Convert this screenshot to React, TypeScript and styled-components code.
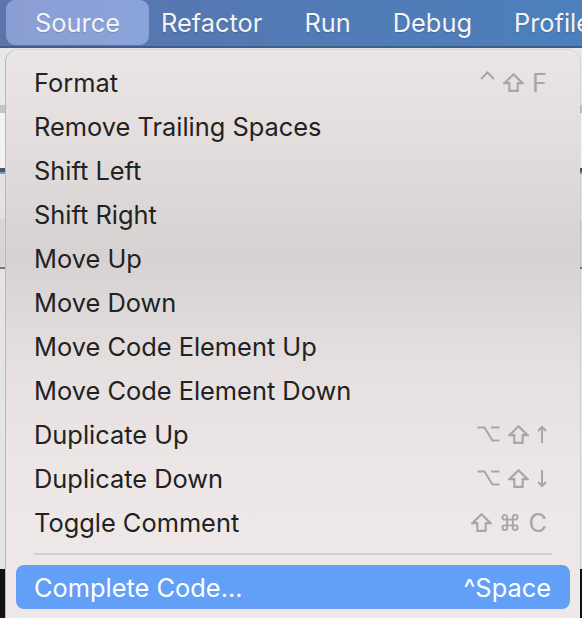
import React from "react";
import styled, { createGlobalStyle } from "styled-components";

const Global = createGlobalStyle`
  html, body { margin: 0; padding: 0; }
  body { width: 582px; height: 618px; overflow: hidden; background: #dcdcdc; }
  * { box-sizing: border-box; }
`;

const Page = styled.div`
  position: relative;
  width: 582px;
  height: 618px;
  overflow: hidden;
  font-family: Inter, "Liberation Sans", sans-serif;
  display: flex;
  flex-direction: column;
`;

const MenuBar = styled.div`
  height: 48px;
  flex: none;
  display: flex;
  align-items: stretch;
  padding: 0 0 1px 6px;
  background: linear-gradient(90deg, #5c74aa 0%, #5479b3 40%, #4b80bc 100%);
  border-bottom: 2px solid #3d5f8a;
  overflow: hidden;
`;

const MenuTitle = styled.div<{ $active?: boolean }>`
  display: flex;
  align-items: center;
  flex: none;
  font-size: 25.4px;
  color: #f4f4f8;
  white-space: nowrap;
  padding: ${(p) => (p.$active ? "0 29px" : "0 21px")};
  margin-right: ${(p) => (p.$active ? "-9px" : "0")};
  border-radius: ${(p) => (p.$active ? "9px" : "0")};
  background: ${(p) => (p.$active ? "linear-gradient(90deg, #8a9ed4, #8aa4d9)" : "transparent")};
  text-shadow: 0 1px 1px rgba(0, 0, 0, 0.15);
`;

const Backdrop = styled.div`
  flex: 1;
  display: flex;
  flex-direction: column;
  background: #e6e6e6;
`;

const Strip = styled.div<{ $h: number; $bg: string }>`
  height: ${(p) => p.$h}px;
  flex: none;
  background: ${(p) => p.$bg};
`;

const Dropdown = styled.div`
  position: absolute;
  left: 6px;
  top: 50px;
  right: 2px;
  bottom: -20px;
  border-radius: 12px;
  background: linear-gradient(
    180deg,
    #ebe5e5 0%,
    #e3dddd 15%,
    #d7d2d2 35%,
    #e6e0e0 55%,
    #ede8e7 75%,
    #eee9e8 100%
  );
  box-shadow: -1px 0 0 #b9b9b9, 0 0 0 1px rgba(0, 0, 0, 0.08);
  padding: 10px 10px 0 10px;
  display: flex;
  flex-direction: column;
`;

const Item = styled.div<{ $selected?: boolean }>`
  height: 44px;
  display: flex;
  align-items: center;
  justify-content: space-between;
  padding: 0 ${(p) => (p.$selected ? "19px" : "23px")} 0 18px;
  border-radius: 8px;
  font-size: 25.4px;
  color: ${(p) => (p.$selected ? "#ffffff" : "#222222")};
  background: ${(p) => (p.$selected ? "#62a0f7" : "transparent")};
`;

const Label = styled.span`
  white-space: nowrap;
`;

const Shortcut = styled.span<{ $selected?: boolean }>`
  display: flex;
  align-items: center;
  gap: 8px;
  color: ${(p) => (p.$selected ? "#ffffff" : "#a9a5a4")};
  font-size: 25.4px;
  white-space: nowrap;
`;

const KeyIcon = styled.svg<{ $raise?: number }>`
  display: block;
  flex: none;
  fill: none;
  stroke: currentColor;
  stroke-width: 2;
  stroke-linejoin: miter;
  transform: translateY(${(p) => -(p.$raise ?? 0)}px);
`;

const Control = () => (
  <KeyIcon width="15" height="9" viewBox="0 0 15 9" $raise={7}>
    <path d="M1 8 L7.5 1.5 L14 8" />
  </KeyIcon>
);
const Shift = () => (
  <KeyIcon width="21" height="19" viewBox="0 0 20 18">
    <path d="M10 1.2 L18.6 9.6 H14 V17 H6 V9.6 H1.4 Z" />
  </KeyIcon>
);
const Option = () => (
  <KeyIcon width="23" height="16" viewBox="0 0 23 16">
    <path d="M0.5 1.5 H7.5 L15.5 14.5 H22.5 M14 1.5 H22.5" />
  </KeyIcon>
);
const Command = () => (
  <KeyIcon width="20" height="19" viewBox="0 0 20 20">
    <path d="M7 7 V4.5 A2.5 2.5 0 1 0 4.5 7 H15.5 A2.5 2.5 0 1 0 13 4.5 V15.5 A2.5 2.5 0 1 0 15.5 13 H4.5 A2.5 2.5 0 1 0 7 15.5 Z" />
  </KeyIcon>
);
const ArrowUp = () => (
  <KeyIcon width="10" height="19" viewBox="0 0 10 18">
    <path d="M5 1.5 V17.5 M1 5.5 L5 1.5 L9 5.5" />
  </KeyIcon>
);
const ArrowDown = () => (
  <KeyIcon width="10" height="19" viewBox="0 0 10 18">
    <path d="M5 0.5 V16.5 M1 12.5 L5 16.5 L9 12.5" />
  </KeyIcon>
);

type Entry = { label: string; keys?: React.ReactNode };

const items: Entry[] = [
  {
    label: "Format",
    keys: (
      <>
        <Control />
        <Shift />
        <span>F</span>
      </>
    ),
  },
  { label: "Remove Trailing Spaces" },
  { label: "Shift Left" },
  { label: "Shift Right" },
  { label: "Move Up" },
  { label: "Move Down" },
  { label: "Move Code Element Up" },
  { label: "Move Code Element Down" },
  {
    label: "Duplicate Up",
    keys: (
      <>
        <Option />
        <Shift />
        <ArrowUp />
      </>
    ),
  },
  {
    label: "Duplicate Down",
    keys: (
      <>
        <Option />
        <Shift />
        <ArrowDown />
      </>
    ),
  },
  {
    label: "Toggle Comment",
    keys: (
      <>
        <Shift />
        <Command />
        <span>C</span>
      </>
    ),
  },
];

const Separator = styled.div`
  height: 2px;
  margin: 9px 18px 10px 18px;
  background: #d3cece;
`;

export default function App() {
  return (
    <>
      <Global />
      <Page>
        <MenuBar>
          <MenuTitle $active>Source</MenuTitle>
          <MenuTitle>Refactor</MenuTitle>
          <MenuTitle>Run</MenuTitle>
          <MenuTitle>Debug</MenuTitle>
          <MenuTitle>Profile</MenuTitle>
        </MenuBar>
        <Backdrop>
          <Strip $h={57} $bg="#e8e8e8" />
          <Strip $h={8} $bg="#c4c4c4" />
          <Strip $h={55} $bg="#f2f2f2" />
          <Strip $h={4} $bg="#555555" />
          <Strip $h={2} $bg="#6aa0e0" />
          <Strip $h={45} $bg="#e2e2e2" />
          <Strip $h={48} $bg="#d6d6d6" />
          <Strip $h={2} $bg="#777777" />
          <Strip $h={300} $bg="#e4e4e4" />
          <Strip $h={60} $bg="#111111" />
        </Backdrop>
        <Dropdown>
          {items.map((it) => (
            <Item key={it.label}>
              <Label>{it.label}</Label>
              {it.keys && <Shortcut>{it.keys}</Shortcut>}
            </Item>
          ))}
          <Separator />
          <Item $selected>
            <Label>Complete Code...</Label>
            <Shortcut $selected>^Space</Shortcut>
          </Item>
        </Dropdown>
      </Page>
    </>
  );
}
